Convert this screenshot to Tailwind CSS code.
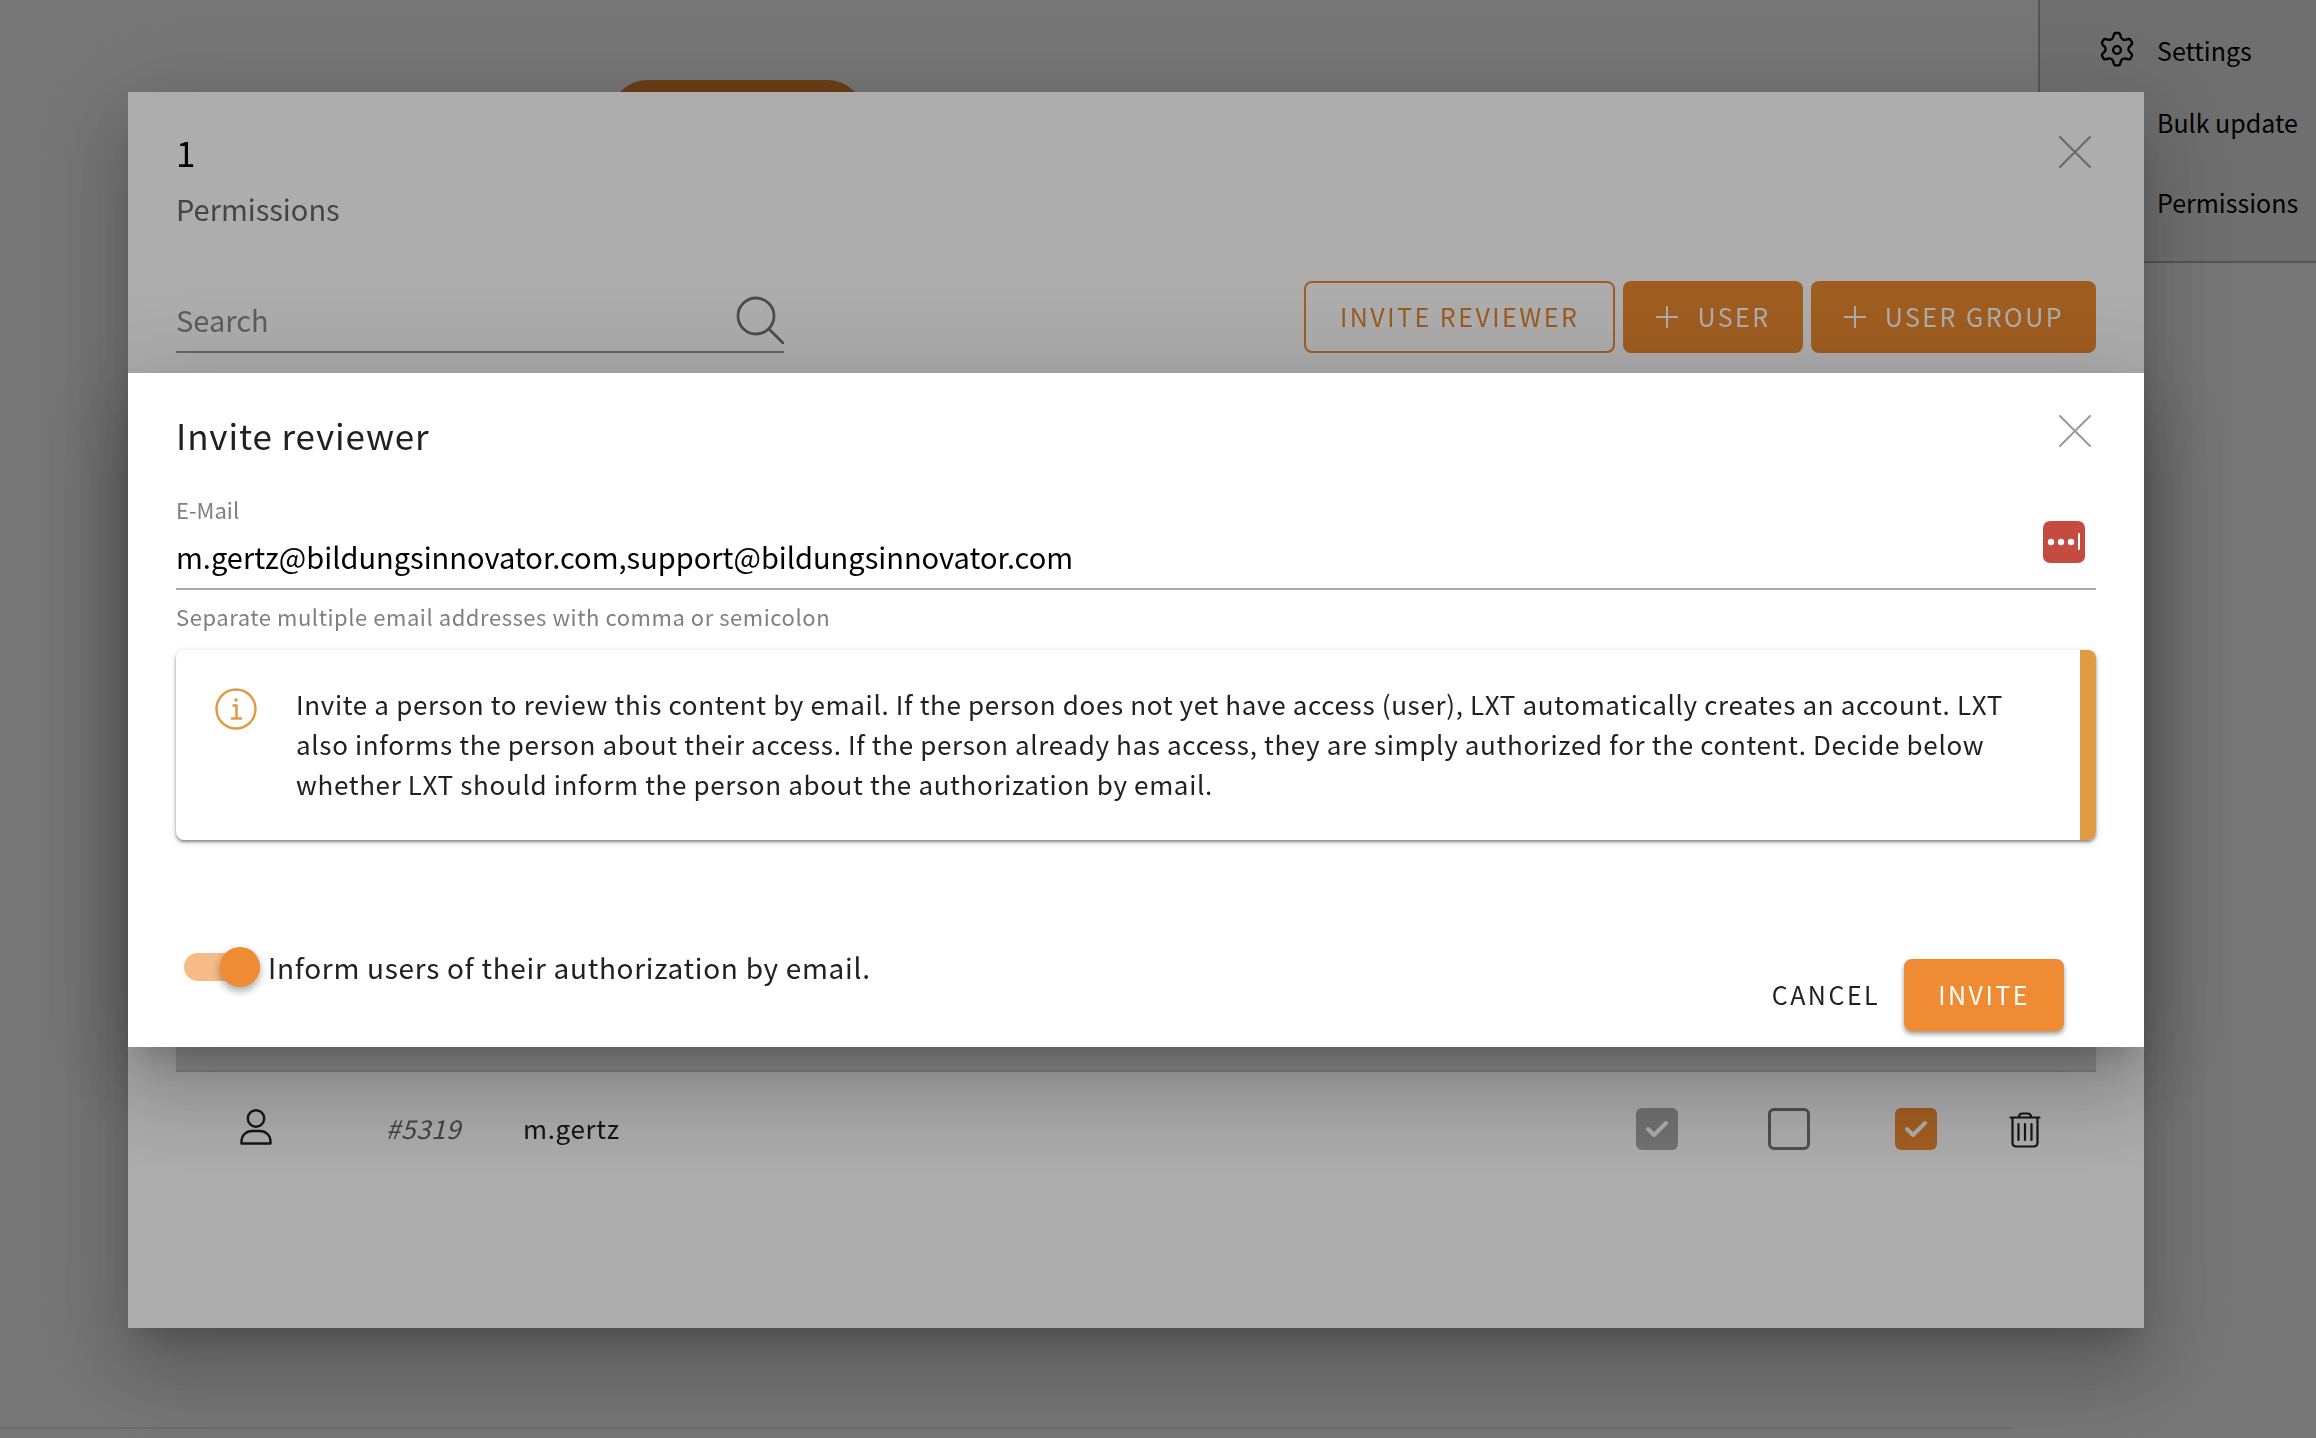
<!DOCTYPE html>
<html lang="en">
  <head>
    <meta charset="UTF-8" />
    <title>Invite reviewer</title>
    <script src="https://cdn.jsdelivr.net/npm/@tailwindcss/browser@4"></script>
  </head>
  <body class="min-h-screen bg-white font-['Noto_Sans_CJK_SC','Noto_Sans',sans-serif] text-black overflow-hidden">
    <!-- Page behind the dialogs -->
    <div class="flex min-h-screen">
      <main class="flex flex-1 flex-col justify-between pt-20 pr-6 pb-[9px]">
        <button type="button" aria-label="Create" class="ml-[611px] h-[72px] w-[253px] rounded-full bg-[#e6862f]"></button>
        <hr class="border-t-2 border-[#e8e8e8]" />
      </main>
      <aside class="w-[278px] shrink-0">
        <nav class="grid h-[263px] grid-cols-[117px_1fr] content-start border-b-2 border-l-2 border-[#b8b8b8] bg-[#f0f0f0] pt-[26px] text-[25px] leading-12">
          <svg class="mt-1 ml-[57px] size-10" viewBox="0 0 24 24" fill="none" stroke="currentColor" stroke-width="1.4" stroke-linejoin="round">
            <circle cx="12" cy="12" r="2.300" />
            <path d="M10.2 2.5q.3-.7 1-.7h1.6q.7 0 1 .7l.6 2q.2.6.8.9l.5.3q.6.4 1.2.2l2-.5q.8-.1 1.2.5l.8 1.4q.4.7-.1 1.3l-1.4 1.5q-.5.5-.5 1.1v.6q0 .6.5 1.1l1.4 1.5q.5.6.1 1.3l-.8 1.4q-.4.6-1.2.5l-2-.5q-.6-.2-1.2.2l-.5.3q-.6.3-.8.9l-.6 2q-.3.7-1 .7h-1.6q-.7 0-1-.7l-.6-2q-.2-.6-.8-.9l-.5-.3q-.6-.4-1.2-.2l-2 .5q-.8.1-1.2-.5l-.8-1.4q-.4-.7.1-1.3l1.400-1.500q.5-.5.5-1.100v-.6q0-.6-.5-1.100L3.200 8.600q-.5-.6-.1-1.300l.8-1.400q.4-.6 1.200-.5l2 .5q.6.2 1.200-.2l.5-.3q.6-.3.800-.9z" />
          </svg>
          <a href="#settings">Settings</a>
          <a href="#bulk" class="col-start-2 mt-6">Bulk update</a>
          <a href="#permissions" class="col-start-2 mt-8">Permissions</a>
        </nav>
      </aside>
    </div>

    <!-- Permissions dialog -->
    <div class="fixed inset-0 flex items-center bg-black/32 pr-[172px] pb-[18px] pl-32">
      <section role="dialog" aria-labelledby="permTitle" class="h-[86vh] w-full bg-white px-12 pt-8 shadow-[0_22px_30px_-14px_rgb(0_0_0/0.2),0_48px_76px_6px_rgb(0_0_0/0.14),0_18px_92px_16px_rgb(0_0_0/0.12)]">
        <header class="flex items-start justify-between">
          <div>
            <h1 id="permTitle" class="text-[35px] leading-14">1</h1>
            <p class="text-[29px] leading-14 text-[#666]">Permissions</p>
          </div>
          <button type="button" aria-label="Close" class="mt-2.5 mr-[3px]">
            <svg class="size-9" viewBox="0 0 36 36" fill="none" stroke="#999" stroke-width="2" stroke-linecap="round"><path d="M3 3l30 30M33 3L3 33" /></svg>
          </button>
        </header>

        <div class="mt-[45px] flex items-end justify-between">
          <div class="flex h-[72px] w-[608px] items-center border-b-2 border-[#999] pt-2">
            <input type="text" placeholder="Search" aria-label="Search" class="min-w-0 flex-1 text-[29px] outline-none placeholder:text-[#8a8a8a]" />
            <svg class="size-12" viewBox="0 0 48 48" fill="none" stroke="#707070" stroke-width="2.8" stroke-linecap="round"><circle cx="20" cy="20" r="18" /><path d="M33 33l14 14" /></svg>
          </div>
          <div class="flex gap-2 text-[25px] tracking-widest">
            <button type="button" class="h-[72px] rounded-lg border-2 border-[#ef8b33] px-[34px] text-[#e6862f]">INVITE REVIEWER</button>
            <button type="button" class="flex h-[72px] items-center gap-[18px] rounded-lg bg-[#ec8a30] px-8 text-white">
              <svg class="size-6" viewBox="0 0 24 24" stroke="currentColor" stroke-width="2"><path d="M12 1v22M1 12h22" /></svg>
              USER
            </button>
            <button type="button" class="flex h-[72px] items-center gap-[18px] rounded-lg bg-[#ec8a30] px-8 text-white">
              <svg class="size-6" viewBox="0 0 24 24" stroke="currentColor" stroke-width="2"><path d="M12 1v22M1 12h22" /></svg>
              USER GROUP
            </button>
          </div>
        </div>

        <table class="mt-[622px] w-full table-fixed text-[26px] tracking-wide text-[#212121]">
          <colgroup>
            <col class="w-[160px]" />
            <col class="w-[175px]" />
            <col />
            <col class="w-[132px]" />
            <col class="w-[132px]" />
            <col class="w-[122px]" />
            <col class="w-[119px]" />
          </colgroup>
          <thead>
            <tr class="h-24 border-b-2 border-[#c4c4c4] bg-[#d8d8d8]">
              <th></th><th></th><th></th><th></th><th></th><th></th><th></th>
            </tr>
          </thead>
          <tbody>
            <tr class="h-28">
              <td>
                <svg class="mx-auto size-9" viewBox="0 0 36 36" fill="none" stroke="currentColor" stroke-width="2.4" stroke-linejoin="round"><circle cx="18" cy="9.5" r="8.2" /><path d="M3.5 34.5v-2c0-6 4.5-10.5 10.5-10.5h8c6 0 10.5 4.5 10.5 10.5v2z" /></svg>
              </td>
              <td class="text-center text-[#666] italic">#5319</td>
              <td class="pl-3">m.gertz</td>
              <td class="text-center">
                <span class="inline-grid align-middle">
                  <input type="checkbox" checked disabled aria-label="Read" class="col-start-1 row-start-1 size-[42px] appearance-none rounded-md bg-[#a8a8a8]" />
                  <svg class="pointer-events-none col-start-1 row-start-1 size-[42px]" viewBox="0 0 42 42" fill="none" stroke="#fff" stroke-width="4" stroke-linecap="round" stroke-linejoin="round"><path d="M12 21l6 6 12-12" /></svg>
                </span>
              </td>
              <td class="text-center">
                <input type="checkbox" aria-label="Review" class="size-[42px] appearance-none rounded-md border-3 border-[#777] align-middle" />
              </td>
              <td class="text-center">
                <span class="inline-grid align-middle">
                  <input type="checkbox" checked aria-label="Write" class="col-start-1 row-start-1 size-[42px] appearance-none rounded-md bg-[#ef8b33]" />
                  <svg class="pointer-events-none col-start-1 row-start-1 size-[42px]" viewBox="0 0 42 42" fill="none" stroke="#fff" stroke-width="4" stroke-linecap="round" stroke-linejoin="round"><path d="M12 21l6 6 12-12" /></svg>
                </span>
              </td>
              <td class="pr-6 text-center">
                <button type="button" aria-label="Delete" class="align-middle">
                  <svg class="h-9 w-8" viewBox="0 0 32 36" fill="none" stroke="currentColor" stroke-width="2.2" stroke-linecap="round"><path d="M1.5 5.5h29M10 5c0-2.5 1.5-3.5 3.5-3.5h5c2 0 3.5 1 3.5 3.5M3.5 6v24.5c0 2.500 1.500 4 4 4h17c2.500 0 4-1.500 4-4V6M9.500 12v16M16 12v16M22.500 12v16" /></svg>
                </button>
              </td>
            </tr>
          </tbody>
        </table>
      </section>
    </div>

    <!-- Invite dialog -->
    <div class="fixed inset-0 flex items-center bg-black/32 pr-[172px] pb-[18px] pl-32">
      <section role="dialog" aria-labelledby="inviteTitle" class="w-full bg-white px-12 pt-[30px] pb-4 shadow-[0_22px_30px_-14px_rgb(0_0_0/0.2),0_48px_76px_6px_rgb(0_0_0/0.14),0_18px_92px_16px_rgb(0_0_0/0.12)]">
        <header class="flex items-start justify-between">
          <h2 id="inviteTitle" class="text-[35px] leading-16 tracking-wide text-[#212121]">Invite reviewer</h2>
          <button type="button" aria-label="Close" class="mt-2.5 mr-[3px]">
            <svg class="size-9" viewBox="0 0 36 36" fill="none" stroke="#999" stroke-width="2" stroke-linecap="round"><path d="M3 3l30 30M33 3L3 33" /></svg>
          </button>
        </header>

        <form>
          <div class="mt-[26px] flex items-center justify-between border-b-2 border-[#aaa] pb-2">
            <div class="flex-1">
              <label for="email" class="block text-[22px] leading-8 text-[#808080]">E-Mail</label>
              <input id="email" type="text" value="m.gertz@bildungsinnovator.com,support@bildungsinnovator.com" class="mt-[7px] h-12 w-full text-[29px] outline-none" />
            </div>
            <svg class="mt-2.5 mr-[11px] size-[42px]" viewBox="0 0 42 42" fill="#fff"><rect width="42" height="42" rx="7" fill="#c54b41" /><circle cx="8" cy="21" r="3.2" /><circle cx="18" cy="21" r="3.2" /><circle cx="28" cy="21" r="3.2" /><rect x="35" y="12" width="2" height="17" rx="1" /></svg>
          </div>
          <p class="mt-2.5 text-[22px] leading-8 tracking-wide text-[#808080]">Separate multiple email addresses with comma or semicolon</p>

          <div class="mt-[18px] flex gap-[39px] rounded-lg border-r-16 border-[#e09a43] pt-[34px] pb-9 pl-[39px] pr-16 shadow-[0_2px_3px_rgb(0_0_0/0.4),0_2px_8px_rgb(0_0_0/0.14)]">
            <svg class="mt-1 size-[42px] shrink-0" viewBox="0 0 42 42" fill="none" stroke="#e09a43" stroke-width="2.5"><circle cx="21" cy="21" r="19.5" /><path d="M17.5 17.5h4v12M16 30.5h11" /><circle cx="21" cy="12" r="1.8" fill="#e09a43" stroke="none" /></svg>
            <p class="text-[26px] leading-10 tracking-wide text-[#212121]">Invite a person to review this content by email. If the person does not yet have access (user), LXT automatically creates an account. LXT also informs the person about their access. If the person already has access, they are simply authorized for the content. Decide below whether LXT should inform the person about the authorization by email.</p>
          </div>

          <div class="mt-[103px] flex items-start justify-between pr-8 pl-2">
            <label class="flex items-center gap-2 text-[28px] leading-12 tracking-wide text-[#212121]">
              <input type="checkbox" role="switch" checked class="relative h-7 w-[76px] appearance-none rounded-full bg-[#f6bb86] before:absolute before:-top-1.5 before:right-0 before:size-10 before:rounded-full before:bg-[#ef8b33] before:shadow-[0_4px_8px_rgb(0_0_0/0.35)]" />
              Inform users of their authorization by email.
            </label>
            <div class="flex gap-6 pt-4 text-[25px] tracking-widest">
              <button type="button" class="text-[#212121]">CANCEL</button>
              <button type="submit" class="h-[72px] rounded-lg bg-[#ef8b33] px-[34px] text-white shadow-[0_3px_5px_rgb(0_0_0/0.4)]">INVITE</button>
            </div>
          </div>
        </form>
      </section>
    </div>
  </body>
</html>
